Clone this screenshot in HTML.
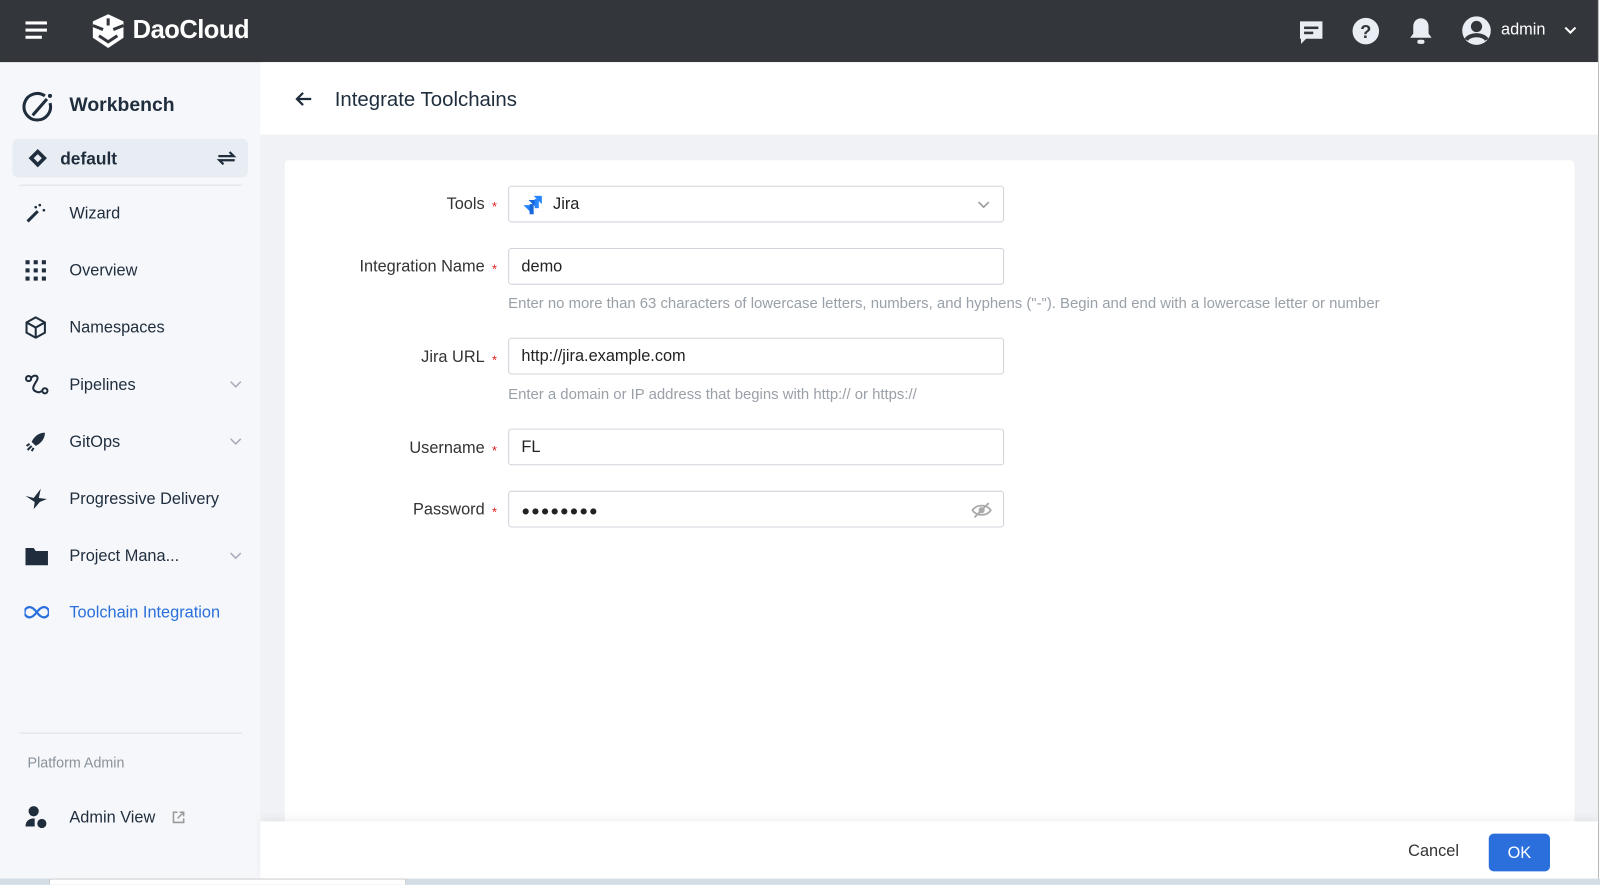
<!DOCTYPE html>
<html><head><meta charset="utf-8"><style>
*{box-sizing:border-box;margin:0;padding:0}
body{width:1600px;height:885px;overflow:hidden;font-family:"Liberation Sans",sans-serif;background:#d3dde6;position:relative;color:#1f2937}
#w{position:absolute;left:0;top:0;width:1568px;height:867px;transform:scale(1.0204);transform-origin:0 0;overflow:hidden;background:#fff}
.hdr{position:absolute;left:0;top:0;width:1566px;height:61px;background:#33363b}
.side{position:absolute;left:0;top:61px;width:255px;height:800px;background:#f5f7fa;box-shadow:2px 0 6px rgba(0,0,0,.05)}
.main{position:absolute;left:255px;top:61px;width:1311px;height:800px;background:#f0f2f5}
.item{position:absolute;left:0;width:255px;height:40px;display:flex;align-items:center;font-size:16px;color:#1f2d3d}
.item svg{position:absolute;left:24px}
.item span{position:absolute;left:68px;top:12px}
.item .chev{left:224px}
.lbl{position:absolute;width:145px;text-align:right;font-size:16px;color:#333;left:330px;margin-top:2px}
.star{color:#e02020;position:absolute;left:482px;font-size:13px;margin-top:2px}
.inp{position:absolute;left:498px;width:486px;height:36px;border:1px solid #cfd3da;border-radius:3px;background:#fff;font-size:16px;color:#222;padding-left:12px;padding-top:2px;display:flex;align-items:center}
.hint{position:absolute;left:498px;font-size:14.6px;color:#9aa0a8;white-space:nowrap;margin-top:2px}
</style></head><body><div id="w">
<div class="hdr">
 <div style="position:absolute;left:25px;top:21px;width:21px;height:2.5px;background:#fff"></div>
 <div style="position:absolute;left:25px;top:28px;width:21px;height:2.5px;background:#fff"></div>
 <div style="position:absolute;left:25px;top:35px;width:16px;height:2.5px;background:#fff"></div>
 <svg style="position:absolute;left:89px;top:13px" width="34" height="35" viewBox="0 0 34 35"><path d="M17 1 L32 8 L32 24 L17 34 L2 24 L2 8Z" fill="#fff"/><path d="M2 12 L12 16 M32 12 L22 16 M17 5 L17 12 M8 22 L17 28 L26 22" stroke="#33363b" stroke-width="3" fill="none"/></svg>
 <div style="position:absolute;left:130px;top:15px;font-size:25px;font-weight:bold;color:#fff;letter-spacing:-.5px">DaoCloud</div>
 <svg style="position:absolute;left:1272px;top:19px" width="26" height="26" viewBox="0 0 26 26"><path d="M2 2h22v17H8l-5 5V19H2z" fill="#e9eef5"/><rect x="6" y="7" width="14" height="2.5" fill="#33363b"/><rect x="6" y="12" width="9" height="2.5" fill="#33363b"/></svg>
 <svg style="position:absolute;left:1325px;top:17px" width="27" height="27" viewBox="0 0 27 27"><circle cx="13.5" cy="13.5" r="13" fill="#e9eef5"/><text x="13.5" y="20" text-anchor="middle" font-size="18" font-weight="bold" fill="#33363b" font-family="Liberation Sans">?</text></svg>
 <svg style="position:absolute;left:1380px;top:16px" width="25" height="28" viewBox="0 0 25 28"><path d="M12.5 2c-5 0-7.5 4-7.5 8v7l-3 4h21l-3-4v-7c0-4-2.5-8-7.5-8z" fill="#e9eef5"/><rect x="9" y="23" width="7" height="4" rx="2" fill="#e9eef5"/></svg>
 <svg style="position:absolute;left:1432px;top:15px" width="30" height="30" viewBox="0 0 30 30"><circle cx="15" cy="15" r="14" fill="#e9eef5"/><circle cx="15" cy="11" r="5.5" fill="#33363b"/><path d="M5 24c3-6 17-6 20 0" stroke="#33363b" stroke-width="4" fill="none"/></svg>
 <div style="position:absolute;left:1471px;top:21px;font-size:16px;color:#fff">admin</div>
 <svg style="position:absolute;left:1532px;top:25px" width="14" height="10"><path d="M2 2l5 5 5-5" stroke="#fff" stroke-width="2" fill="none"/></svg>
</div>
<div style="position:absolute;left:1566px;top:0;width:1px;height:861px;background:#bbb"></div>
<div class="side">
 <svg style="position:absolute;left:22px;top:28px" width="32" height="32" viewBox="0 0 32 32"><path d="M22 5A13 13 0 1 0 27 12" stroke="#1f2d3d" stroke-width="3" fill="none"/><path d="M10 24L24 8" stroke="#1f2d3d" stroke-width="3"/><circle cx="27" cy="5" r="2" fill="#1f2d3d"/></svg>
 <div style="position:absolute;left:68px;top:32px;font-size:19px;color:#1f2d3d;font-weight:bold">Workbench</div>
 <div style="position:absolute;left:12px;top:75px;width:231px;height:38px;background:#e8edf3;border-radius:6px"></div>
 <svg style="position:absolute;left:27px;top:84px" width="20" height="20" viewBox="0 0 20 20"><path d="M10 1L19 10L10 19L1 10Z" fill="#1f2d3d"/><path d="M10 6L14 10L10 14L6 10Z" fill="#e8edf3"/></svg>
 <div style="position:absolute;left:59px;top:85px;font-size:17px;font-weight:bold;color:#1f2d3d">default</div>
 <svg style="position:absolute;left:212px;top:85px" width="20" height="18" viewBox="0 0 20 18"><path d="M2 7h15l-4-4M18 11H3l4 4" stroke="#1f2d3d" stroke-width="2.2" fill="none"/></svg>
 <div style="position:absolute;left:19px;top:120px;width:218px;height:1px;background:#dde1e6"></div>
 <div class="item" style="top:128px"><svg width="22" height="22" viewBox="0 0 22 22"><path d="M3 19L13 9" stroke="#1f2d3d" stroke-width="3"/><circle cx="15" cy="3" r="1.3" fill="#1f2d3d"/><circle cx="19" cy="8" r="1.3" fill="#1f2d3d"/><circle cx="11" cy="5" r="1.3" fill="#1f2d3d"/></svg><span>Wizard</span></div>
 <div class="item" style="top:184px"><svg width="22" height="22" viewBox="0 0 22 22" fill="#1f2d3d"><rect x="1" y="1" width="4" height="4"/><rect x="9" y="1" width="4" height="4"/><rect x="17" y="1" width="4" height="4"/><rect x="1" y="9" width="4" height="4"/><rect x="9" y="9" width="4" height="4"/><rect x="17" y="9" width="4" height="4"/><rect x="1" y="17" width="4" height="4"/><rect x="9" y="17" width="4" height="4"/><rect x="17" y="17" width="4" height="4"/></svg><span>Overview</span></div>
 <div class="item" style="top:240px"><svg width="22" height="22" viewBox="0 0 22 22"><path d="M11 1L20 6V16L11 21L2 16V6Z M2 6L11 11L20 6 M11 11V21" stroke="#1f2d3d" stroke-width="2" fill="none"/></svg><span>Namespaces</span></div>
 <div class="item" style="top:296px"><svg width="24" height="24" viewBox="0 0 24 24"><circle cx="4" cy="6" r="2.5" stroke="#1f2d3d" stroke-width="2" fill="none"/><circle cx="20" cy="18" r="2.5" stroke="#1f2d3d" stroke-width="2" fill="none"/><path d="M6 6c3-5 9-3 6 2s-6 9 0 11c2 1 4 0 5-1" stroke="#1f2d3d" stroke-width="2" fill="none"/></svg><span>Pipelines</span><svg class="chev" width="14" height="10"><path d="M2 2l5 5 5-5" stroke="#aab" stroke-width="1.5" fill="none"/></svg></div>
 <div class="item" style="top:352px"><svg width="22" height="22" viewBox="0 0 22 22"><path d="M20 2c-7 0-11 5-13 9l4 4c4-2 9-6 9-13z" fill="#1f2d3d"/><path d="M3 19l4-4M2 15l3-2M7 20l2-3" stroke="#1f2d3d" stroke-width="2"/></svg><span>GitOps</span><svg class="chev" width="14" height="10"><path d="M2 2l5 5 5-5" stroke="#aab" stroke-width="1.5" fill="none"/></svg></div>
 <div class="item" style="top:408px"><svg width="24" height="22" viewBox="0 0 24 22"><path d="M1 8l8 2 7-9-2 9 8 1-7 3-6 7 1-7z" fill="#1f2d3d"/></svg><span>Progressive Delivery</span></div>
 <div class="item" style="top:464px"><svg width="24" height="20" viewBox="0 0 24 20"><path d="M1 2h8l2 3h12v14H1z" fill="#1f2d3d"/></svg><span>Project Mana...</span><svg class="chev" width="14" height="10"><path d="M2 2l5 5 5-5" stroke="#aab" stroke-width="1.5" fill="none"/></svg></div>
 <div class="item" style="top:519px;color:#2a6fdb"><svg width="24" height="14" viewBox="0 0 24 14"><path d="M12 7c-3-4-5-5-7-5a5 5 0 0 0 0 10c2 0 4-1 7-5s5-5 7-5a5 5 0 0 1 0 10c-2 0-4-1-7-5z" stroke="#2a6fdb" stroke-width="2.2" fill="none"/></svg><span>Toolchain Integration</span></div>
 <div style="position:absolute;left:19px;top:657px;width:218px;height:1px;background:#dde1e6"></div>
 <div style="position:absolute;left:27px;top:678px;font-size:14px;color:#8a929c">Platform Admin</div>
 <div class="item" style="top:720px"><svg width="24" height="24" viewBox="0 0 24 24"><circle cx="9" cy="6" r="5" fill="#1f2d3d"/><path d="M1 21c0-6 4-8 9-8v8z" fill="#1f2d3d"/><circle cx="17" cy="18" r="4.5" fill="#1f2d3d"/></svg><span>Admin View</span><svg style="position:absolute;left:168px" width="14" height="14" viewBox="0 0 14 14"><path d="M6 2H2v10h10V8M8 2h4v4M12 2L6 8" stroke="#999" stroke-width="1.5" fill="none"/></svg></div>
</div>
<div class="main">
 <div style="position:absolute;left:0;top:0;width:1311px;height:71px;background:#fff"></div>
 <svg style="position:absolute;left:33px;top:28px" width="18" height="16" viewBox="0 0 18 16"><path d="M17 8H3M9 2L3 8l6 6" stroke="#1f2d3d" stroke-width="2.2" fill="none"/></svg>
 <div style="position:absolute;left:73px;top:26px;font-size:20px;color:#1f2d3d">Integrate Toolchains</div>
 <div style="position:absolute;left:24px;top:96px;width:1264px;height:660px;background:#fff;border-radius:4px"></div>
 <div style="position:absolute;left:0;top:744px;width:1311px;height:56px;background:#fff;box-shadow:0 -4px 8px rgba(0,0,0,.05)"></div>
 <div style="position:absolute;left:1125px;top:765px;font-size:16px;color:#333">Cancel</div>
 <div style="position:absolute;left:1204px;top:756px;width:60px;height:37px;background:#2a6fdb;border-radius:5px;color:#fff;font-size:16px;text-align:center;line-height:39px">OK</div>
</div>
<div class="lbl" style="top:190px">Tools</div><div class="star" style="top:193px">*</div>
<div class="inp" style="top:182px"><svg width="22" height="20" viewBox="0 0 22 20" style="margin-right:9px"><path d="M20 1h-8l8 8z" fill="#2684ff"/><path d="M14 5H7l7 7z" fill="#1868db"/><path d="M9 10H2l7 7z" fill="#2684ff"/><rect x="13" y="4" width="4" height="9" fill="#2684ff"/><rect x="8" y="9" width="4" height="10" fill="#1868db"/></svg>Jira<svg style="position:absolute;right:12px" width="14" height="10"><path d="M2 2l5 5 5-5" stroke="#999" stroke-width="1.5" fill="none"/></svg></div>
<div class="lbl" style="top:251px">Integration Name</div><div class="star" style="top:254px">*</div>
<div class="inp" style="top:243px">demo</div>
<div class="hint" style="top:288px">Enter no more than 63 characters of lowercase letters, numbers, and hyphens ("-"). Begin and end with a lowercase letter or number</div>
<div class="lbl" style="top:340px">Jira URL</div><div class="star" style="top:343px">*</div>
<div class="inp" style="top:331px">http://jira.example.com</div>
<div class="hint" style="top:377px">Enter a domain or IP address that begins with http:// or https://</div>
<div class="lbl" style="top:429px">Username</div><div class="star" style="top:432px">*</div>
<div class="inp" style="top:420px">FL</div>
<div class="lbl" style="top:489px">Password</div><div class="star" style="top:492px">*</div>
<div class="inp" style="top:481px;letter-spacing:1px;font-size:14px">●●●●●●●●<svg style="position:absolute;right:11px" width="20" height="16" viewBox="0 0 20 16"><path d="M1 8c4-6 14-6 18 0-4 6-14 6-18 0z" stroke="#aaa" stroke-width="1.8" fill="none"/><circle cx="10" cy="8" r="3" fill="#aaa"/><path d="M3 15L17 1" stroke="#aaa" stroke-width="1.8"/></svg></div>
<div style="position:absolute;left:0;top:861px;width:1600px;height:24px;background:#d3dde6"></div>
<div style="position:absolute;left:48px;top:861px;width:350px;height:24px;background:#fff;border:1px solid #ccc"></div>
</div></body></html>
